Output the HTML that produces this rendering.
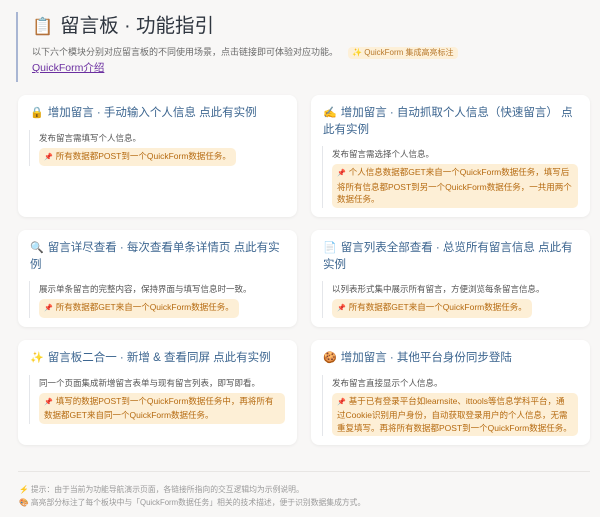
<!DOCTYPE html>
<html><head><meta charset="utf-8"><style>
*{margin:0;padding:0;box-sizing:border-box}
body{width:600px;height:517px;background:#f8f7f6;font-family:"Liberation Sans","Noto Sans CJK SC",sans-serif;position:relative;overflow:hidden}
.hdr{position:absolute;left:16px;top:12px;height:70px;border-left:2px solid #a9b6d3;padding-left:14px}
.hdr h1{font-size:19.5px;font-weight:normal;color:#2f3640;line-height:26px;margin-top:1px}
.hdr h1 span{font-size:17px;margin-right:7px}
.sub{font-size:9px;color:#6b6b6b;margin-top:6px;line-height:12px}
.tag{display:inline-block;background:#fdf0d8;color:#b8792c;border-radius:4px;padding:0 4px;margin-left:10px;font-size:8px}
.lnk{font-size:10.5px;color:#6b2fa0;text-decoration:underline;line-height:14px;margin-top:2px;display:block}
.card{position:absolute;background:#fff;border-radius:8px;box-shadow:0 1px 3px rgba(0,0,0,.06);padding:10px 12px 0 12px}
.t{font-size:11.5px;color:#3d6690;line-height:16.5px;margin-bottom:8px}
.t span{margin-right:4px;font-size:11px}
.q{border-left:1px solid #e4e6ea;padding-left:9px;margin-left:-1px}
.q p{font-size:8.5px;color:#555;line-height:12px;padding-top:2px}
.h{margin-top:4px;background:#fdefd6;color:#b56a10;border-radius:5px;font-size:8.5px;line-height:12.5px;padding:2px 5px;display:inline-block}
.h:before{content:"📌";color:#d33;margin-right:3px;font-size:7px}
.line{position:absolute;left:18px;right:10px;top:471px;border-top:1px solid #e8e6e4}
.ft{position:absolute;left:19px;font-size:7.8px;color:#9a9a9a;line-height:12px}
</style></head><body>
<div class="hdr">
<h1><span>📋</span>留言板 · 功能指引</h1>
<div class="sub">以下六个模块分别对应留言板的不同使用场景，点击链接即可体验对应功能。<span class="tag">✨ QuickForm 集成高亮标注</span></div>
<a class="lnk">QuickForm介绍</a>
</div>

<div class="card" style="left:18px;top:95px;width:279px;height:122px">
<div class="t"><span>🔒</span>增加留言 · 手动输入个人信息 点此有实例</div>
<div class="q"><p>发布留言需填写个人信息。</p><div class="h">所有数据都POST到一个QuickForm数据任务。</div></div>
</div>
<div class="card" style="left:311px;top:95px;width:279px;height:122px">
<div class="t"><span>✍️</span>增加留言 · 自动抓取个人信息（快速留言） 点此有实例</div>
<div class="q"><p>发布留言需选择个人信息。</p><div class="h">个人信息数据都GET来自一个QuickForm数据任务，填写后将所有信息都POST到另一个QuickForm数据任务，一共用两个数据任务。</div></div>
</div>

<div class="card" style="left:18px;top:230px;width:279px;height:97px">
<div class="t"><span>🔍</span>留言详尽查看 · 每次查看单条详情页 点此有实例</div>
<div class="q"><p>展示单条留言的完整内容，保持界面与填写信息时一致。</p><div class="h">所有数据都GET来自一个QuickForm数据任务。</div></div>
</div>
<div class="card" style="left:311px;top:230px;width:279px;height:97px">
<div class="t"><span>📄</span>留言列表全部查看 · 总览所有留言信息 点此有实例</div>
<div class="q"><p>以列表形式集中展示所有留言，方便浏览每条留言信息。</p><div class="h">所有数据都GET来自一个QuickForm数据任务。</div></div>
</div>

<div class="card" style="left:18px;top:340px;width:279px;height:105px">
<div class="t"><span>✨</span>留言板二合一 · 新增 &amp; 查看同屏 点此有实例</div>
<div class="q"><p>同一个页面集成新增留言表单与现有留言列表，即写即看。</p><div class="h">填写的数据POST到一个QuickForm数据任务中，再将所有数据都GET来自同一个QuickForm数据任务。</div></div>
</div>
<div class="card" style="left:311px;top:340px;width:279px;height:105px">
<div class="t"><span>🍪</span>增加留言 · 其他平台身份同步登陆</div>
<div class="q"><p>发布留言直接显示个人信息。</p><div class="h">基于已有登录平台如learnsite、ittools等信息学科平台，通过Cookie识别用户身份，自动获取登录用户的个人信息，无需重复填写。再将所有数据都POST到一个QuickForm数据任务。</div></div>
</div>

<div class="line"></div>
<div class="ft" style="top:484px">⚡ 提示：由于当前为功能导航演示页面，各链接所指向的交互逻辑均为示例说明。</div>
<div class="ft" style="top:497px">🎨 高亮部分标注了每个板块中与「QuickForm数据任务」相关的技术描述，便于识别数据集成方式。</div>
</body></html>
